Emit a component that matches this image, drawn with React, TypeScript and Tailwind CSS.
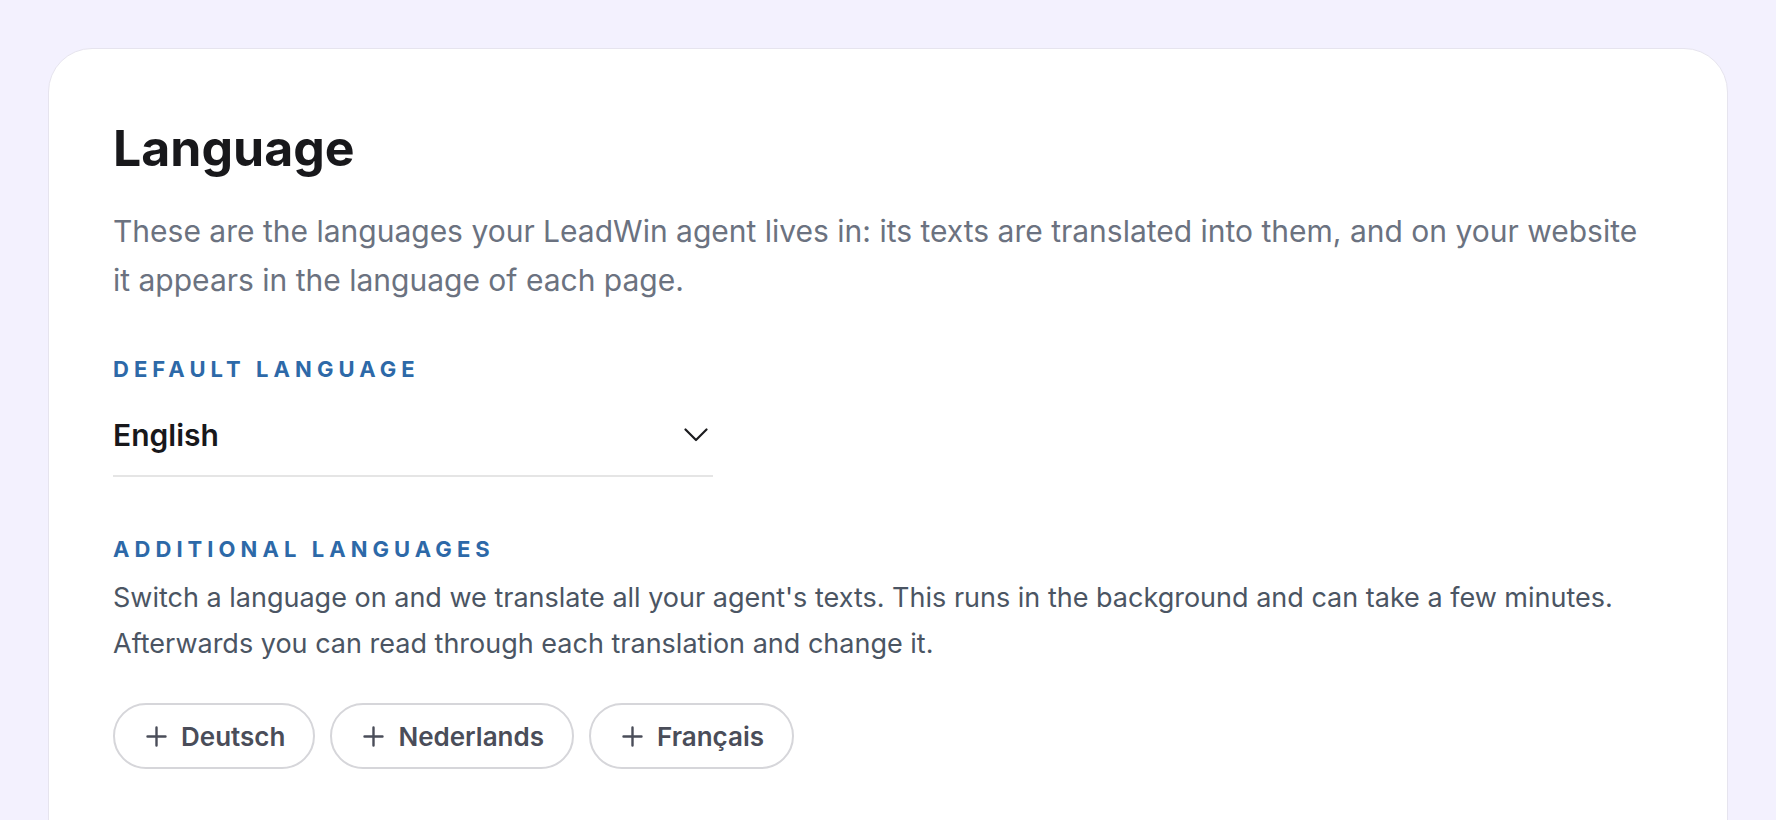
import { useState } from 'react'

const extraLanguages = ['Deutsch', 'Nederlands', 'Français']

function ChevronDown() {
  return (
    <svg width="24" height="14" viewBox="0 0 24 14" fill="none" className="shrink-0">
      <path d="M1.5 1.5 12 12l10.5-10.5" stroke="#1c1c1f" strokeWidth="2.2" strokeLinecap="round" strokeLinejoin="round" />
    </svg>
  )
}

function PlusIcon() {
  return (
    <svg width="21" height="21" viewBox="0 0 21 21" fill="none" className="shrink-0">
      <path d="M10.5 1.5v18M1.5 10.5h18" stroke="currentColor" strokeWidth="2.4" strokeLinecap="round" />
    </svg>
  )
}

export default function App() {
  const [defaultLanguage] = useState('English')

  return (
    <div
      className="min-h-screen bg-[#f3f1fe] px-12 pt-12"
      style={{ fontFamily: 'Inter, "Noto Sans", "Liberation Sans", sans-serif' }}
    >
      <div className="rounded-[44px] border border-[#e6e4ee] bg-white px-16 pt-[70px] pb-24">
        <h1 className="text-[50px] leading-[58px] font-bold text-[#18181b]">Language</h1>
        <p className="mt-[30px] max-w-[1540px] text-[30px] leading-[49px] text-[#6b7280]">
          These are the languages your LeadWin agent lives in: its texts are translated into them, and on your website
          it appears in the language of each page.
        </p>

        <div className="mt-[50px] text-[22px] leading-7 font-bold tracking-[0.23em] text-[#2d69a8] uppercase">
          Default language
        </div>
        <button className="mt-8 flex w-[600px] items-center justify-between border-b-2 border-[#e5e5e5] pr-[5px] pb-5 text-left">
          <span className="text-[30px] leading-10 font-semibold text-[#18181b]">{defaultLanguage}</span>
          <ChevronDown />
        </button>

        <div className="mt-[58px] text-[22px] leading-7 font-bold tracking-[0.23em] text-[#2d69a8] uppercase">
          Additional languages
        </div>
        <p className="mt-3 text-[27px] leading-[46px] text-[#4b5563]">
          Switch a language on and we translate all your agent's texts. This runs in the background and can take a few
          minutes.
          <br />
          Afterwards you can read through each translation and change it.
        </p>

        <div className="mt-9 flex flex-wrap gap-[15px]">
          {extraLanguages.map((lang) => (
            <button
              key={lang}
              className="flex h-[66px] items-center gap-[14px] rounded-full border-2 border-[#d6d6da] bg-white pr-7 pl-[31px] text-[26px] font-semibold text-[#4a4d59]"
            >
              <PlusIcon />
              {lang}
            </button>
          ))}
        </div>
      </div>
    </div>
  )
}
